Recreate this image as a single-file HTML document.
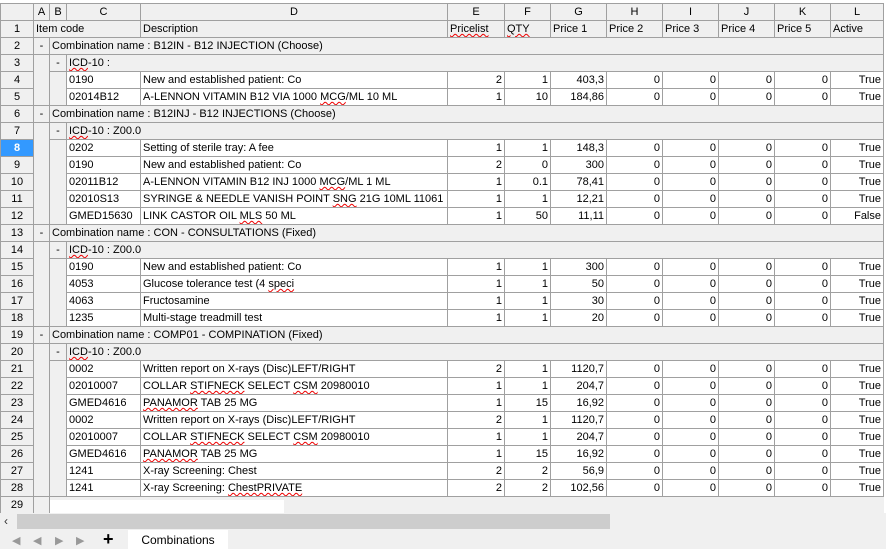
<!DOCTYPE html>
<html><head><meta charset="utf-8"><style>
html,body{margin:0;padding:0;background:#fff;width:886px;height:549px;overflow:hidden;font-family:"Liberation Sans",Arial,sans-serif;font-size:11px;color:#000}
table{position:absolute;left:0;top:3px;border-collapse:collapse;table-layout:fixed;width:883px}
td{height:16px;padding:0 2px;border:1px solid #a0a0a0;white-space:nowrap;overflow:hidden;line-height:16px;background:#fff}
td.h{background:#f0f0f0;text-align:center}
td.g{background:#f0f0f0}
td.n{background:#f0f0f0;border-top:none;border-bottom:none}
td.r{text-align:right}
td.sel{background:#3399ff;color:#fff;font-weight:bold}
.w{text-decoration:underline wavy #e00;text-decoration-thickness:1px}
#sb{position:absolute;left:0;top:513px;width:886px;height:17px;background:#f0f0f0}
#thumb{position:absolute;left:17px;top:1px;width:593px;height:15px;background:#cdcdcd}
#tabs{position:absolute;left:0;top:530px;width:886px;height:19px;background:#f0f0f0}
#tab{position:absolute;left:128px;top:0;width:100px;height:19px;background:#fff;text-align:center;line-height:20px;font-size:12px}
.nav{position:absolute;top:4px;color:#999;font-size:11px}
</style></head><body>
<table>
<colgroup><col style="width:33px"><col style="width:16px"><col style="width:17px"><col style="width:74px"><col style="width:307px"><col style="width:57px"><col style="width:46px"><col style="width:56px"><col style="width:56px"><col style="width:56px"><col style="width:56px"><col style="width:56px"><col style="width:53px"></colgroup>
<tr><td class="h"></td><td class="h">A</td><td class="h">B</td><td class="h">C</td><td class="h">D</td><td class="h">E</td><td class="h">F</td><td class="h">G</td><td class="h">H</td><td class="h">I</td><td class="h">J</td><td class="h">K</td><td class="h">L</td></tr>
<tr><td class="h">1</td><td class="g" colspan="3">Item code</td><td class="g">Description</td><td class="g"><span class="w">Pricelist</span></td><td class="g"><span class="w">QTY</span></td><td class="g">Price 1</td><td class="g">Price 2</td><td class="g">Price 3</td><td class="g">Price 4</td><td class="g">Price 5</td><td class="g">Active</td></tr>

<tr><td class="h">2</td><td class="g" style="text-align:center">-</td><td class="g" colspan="11">Combination name : B12IN - B12 INJECTION (Choose)</td></tr>
<tr><td class="h">3</td><td class="n"></td><td class="g" style="text-align:center">-</td><td class="g" colspan="10"><span class="w">ICD</span>-10 :</td></tr>
<tr><td class="h">4</td><td class="n"></td><td class="n"></td><td>0190</td><td>New and established patient: Co</td><td class="r">2</td><td class="r">1</td><td class="r">403,3</td><td class="r">0</td><td class="r">0</td><td class="r">0</td><td class="r">0</td><td class="r">True</td></tr>
<tr><td class="h">5</td><td class="n"></td><td class="n"></td><td>02014B12</td><td>A-LENNON VITAMIN B12 VIA 1000 <span class="w">MCG</span>/ML 10 ML</td><td class="r">1</td><td class="r">10</td><td class="r">184,86</td><td class="r">0</td><td class="r">0</td><td class="r">0</td><td class="r">0</td><td class="r">True</td></tr>

<tr><td class="h">6</td><td class="g" style="text-align:center">-</td><td class="g" colspan="11">Combination name : B12INJ - B12 INJECTIONS (Choose)</td></tr>
<tr><td class="h">7</td><td class="n"></td><td class="g" style="text-align:center">-</td><td class="g" colspan="10"><span class="w">ICD</span>-10 : Z00.0</td></tr>
<tr><td class="h sel">8</td><td class="n"></td><td class="n"></td><td>0202</td><td>Setting of sterile tray: A fee</td><td class="r">1</td><td class="r">1</td><td class="r">148,3</td><td class="r">0</td><td class="r">0</td><td class="r">0</td><td class="r">0</td><td class="r">True</td></tr>
<tr><td class="h">9</td><td class="n"></td><td class="n"></td><td>0190</td><td>New and established patient: Co</td><td class="r">2</td><td class="r">0</td><td class="r">300</td><td class="r">0</td><td class="r">0</td><td class="r">0</td><td class="r">0</td><td class="r">True</td></tr>
<tr><td class="h">10</td><td class="n"></td><td class="n"></td><td>02011B12</td><td>A-LENNON VITAMIN B12 INJ 1000 <span class="w">MCG</span>/ML 1 ML</td><td class="r">1</td><td class="r">0.1</td><td class="r">78,41</td><td class="r">0</td><td class="r">0</td><td class="r">0</td><td class="r">0</td><td class="r">True</td></tr>
<tr><td class="h">11</td><td class="n"></td><td class="n"></td><td>02010S13</td><td>SYRINGE &amp; NEEDLE VANISH POINT <span class="w">SNG</span> 21G 10ML 11061</td><td class="r">1</td><td class="r">1</td><td class="r">12,21</td><td class="r">0</td><td class="r">0</td><td class="r">0</td><td class="r">0</td><td class="r">True</td></tr>
<tr><td class="h">12</td><td class="n"></td><td class="n"></td><td>GMED15630</td><td>LINK CASTOR OIL <span class="w">MLS</span> 50 ML</td><td class="r">1</td><td class="r">50</td><td class="r">11,11</td><td class="r">0</td><td class="r">0</td><td class="r">0</td><td class="r">0</td><td class="r">False</td></tr>

<tr><td class="h">13</td><td class="g" style="text-align:center">-</td><td class="g" colspan="11">Combination name : CON - CONSULTATIONS (Fixed)</td></tr>
<tr><td class="h">14</td><td class="n"></td><td class="g" style="text-align:center">-</td><td class="g" colspan="10"><span class="w">ICD</span>-10 : Z00.0</td></tr>
<tr><td class="h">15</td><td class="n"></td><td class="n"></td><td>0190</td><td>New and established patient: Co</td><td class="r">1</td><td class="r">1</td><td class="r">300</td><td class="r">0</td><td class="r">0</td><td class="r">0</td><td class="r">0</td><td class="r">True</td></tr>
<tr><td class="h">16</td><td class="n"></td><td class="n"></td><td>4053</td><td>Glucose tolerance test (4 <span class="w">speci</span></td><td class="r">1</td><td class="r">1</td><td class="r">50</td><td class="r">0</td><td class="r">0</td><td class="r">0</td><td class="r">0</td><td class="r">True</td></tr>
<tr><td class="h">17</td><td class="n"></td><td class="n"></td><td>4063</td><td>Fructosamine</td><td class="r">1</td><td class="r">1</td><td class="r">30</td><td class="r">0</td><td class="r">0</td><td class="r">0</td><td class="r">0</td><td class="r">True</td></tr>
<tr><td class="h">18</td><td class="n"></td><td class="n"></td><td>1235</td><td>Multi-stage treadmill test</td><td class="r">1</td><td class="r">1</td><td class="r">20</td><td class="r">0</td><td class="r">0</td><td class="r">0</td><td class="r">0</td><td class="r">True</td></tr>

<tr><td class="h">19</td><td class="g" style="text-align:center">-</td><td class="g" colspan="11">Combination name : COMP01 - COMPINATION (Fixed)</td></tr>
<tr><td class="h">20</td><td class="n"></td><td class="g" style="text-align:center">-</td><td class="g" colspan="10"><span class="w">ICD</span>-10 : Z00.0</td></tr>
<tr><td class="h">21</td><td class="n"></td><td class="n"></td><td>0002</td><td>Written report on X-rays (Disc)LEFT/RIGHT</td><td class="r">2</td><td class="r">1</td><td class="r">1120,7</td><td class="r">0</td><td class="r">0</td><td class="r">0</td><td class="r">0</td><td class="r">True</td></tr>
<tr><td class="h">22</td><td class="n"></td><td class="n"></td><td>02010007</td><td>COLLAR <span class="w">STIFNECK</span> SELECT <span class="w">CSM</span> 20980010</td><td class="r">1</td><td class="r">1</td><td class="r">204,7</td><td class="r">0</td><td class="r">0</td><td class="r">0</td><td class="r">0</td><td class="r">True</td></tr>
<tr><td class="h">23</td><td class="n"></td><td class="n"></td><td>GMED4616</td><td><span class="w">PANAMOR</span> TAB 25 MG</td><td class="r">1</td><td class="r">15</td><td class="r">16,92</td><td class="r">0</td><td class="r">0</td><td class="r">0</td><td class="r">0</td><td class="r">True</td></tr>
<tr><td class="h">24</td><td class="n"></td><td class="n"></td><td>0002</td><td>Written report on X-rays (Disc)LEFT/RIGHT</td><td class="r">2</td><td class="r">1</td><td class="r">1120,7</td><td class="r">0</td><td class="r">0</td><td class="r">0</td><td class="r">0</td><td class="r">True</td></tr>
<tr><td class="h">25</td><td class="n"></td><td class="n"></td><td>02010007</td><td>COLLAR <span class="w">STIFNECK</span> SELECT <span class="w">CSM</span> 20980010</td><td class="r">1</td><td class="r">1</td><td class="r">204,7</td><td class="r">0</td><td class="r">0</td><td class="r">0</td><td class="r">0</td><td class="r">True</td></tr>
<tr><td class="h">26</td><td class="n"></td><td class="n"></td><td>GMED4616</td><td><span class="w">PANAMOR</span> TAB 25 MG</td><td class="r">1</td><td class="r">15</td><td class="r">16,92</td><td class="r">0</td><td class="r">0</td><td class="r">0</td><td class="r">0</td><td class="r">True</td></tr>
<tr><td class="h">27</td><td class="n"></td><td class="n"></td><td>1241</td><td>X-ray Screening: Chest</td><td class="r">2</td><td class="r">2</td><td class="r">56,9</td><td class="r">0</td><td class="r">0</td><td class="r">0</td><td class="r">0</td><td class="r">True</td></tr>
<tr><td class="h">28</td><td class="n"></td><td class="n"></td><td>1241</td><td>X-ray Screening: <span class="w">ChestPRIVATE</span></td><td class="r">2</td><td class="r">2</td><td class="r">102,56</td><td class="r">0</td><td class="r">0</td><td class="r">0</td><td class="r">0</td><td class="r">True</td></tr>
<tr><td class="h">29</td><td class="g"></td><td class="g" colspan="11" style="border-right:none;position:relative"><div style="position:absolute;left:0;top:3px;width:234px;height:13px;background:#fff"></div></td></tr>
</table>
<div id="sb"><span style="position:absolute;left:4px;top:1px;font-size:12px;color:#333">&lsaquo;</span><div id="thumb"></div></div>
<div id="tabs">
<span class="nav" style="left:12px">&#9664;</span>
<span class="nav" style="left:33px">&#9664;</span>
<span class="nav" style="left:55px">&#9654;</span>
<span class="nav" style="left:76px">&#9654;</span>
<span style="position:absolute;left:103px;top:-1px;font-size:18px;font-weight:bold">+</span>
<div id="tab">Combinations</div>
</div>
</body></html>
